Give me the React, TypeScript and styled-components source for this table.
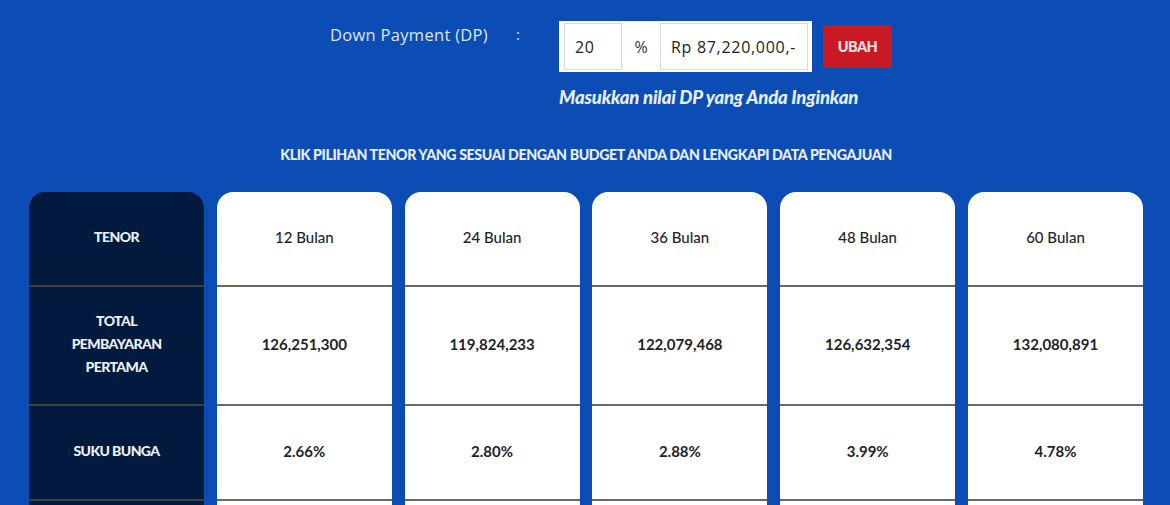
import React from "react";
import styled, { createGlobalStyle } from "styled-components";

const Global = createGlobalStyle`
  html, body { margin: 0; padding: 0; }
  body {
    background: #0b4db4;
    font-family: Lato, "Open Sans", sans-serif;
    width: 1170px;
    height: 505px;
    overflow: hidden;
  }
`;

const Page = styled.div`
  display: flex;
  flex-direction: column;
  padding-top: 21px;
`;

const FormRow = styled.div`
  display: flex;
  align-items: flex-start;
  padding-left: 330px;
`;

const Label = styled.div`
  font-family: "Open Sans", sans-serif;
  font-size: 16.5px;
  letter-spacing: 0.3px;
  color: #dce6f5;
  padding-top: 2px;
  width: 186px;
`;

const Colon = styled.div`
  font-family: "Open Sans", sans-serif;
  font-size: 15px;
  color: #dce6f5;
  padding-top: 3px;
  width: 43px;
`;

const FormBody = styled.div`
  display: flex;
  flex-direction: column;
  gap: 14px;
`;

const Controls = styled.div`
  display: flex;
  align-items: center;
  gap: 11px;
`;

const InputGroup = styled.div`
  display: flex;
  align-items: stretch;
  background: #ffffff;
  padding: 2px 4px 2px 5px;
  height: 47px;
`;

const Field = styled.div<{ $w: number }>`
  width: ${(p) => p.$w}px;
  box-sizing: border-box;
  border: 1px solid #d9d9d9;
  display: flex;
  align-items: center;
  padding-left: 10px;
  font-family: "Open Sans", sans-serif;
  font-size: 16px;
  letter-spacing: 0.7px;
  color: #222;
`;

const Unit = styled.div`
  width: 38px;
  display: flex;
  align-items: center;
  justify-content: center;
  font-family: "Open Sans", sans-serif;
  font-size: 16px;
  color: #333;
`;

const Button = styled.button`
  width: 69px;
  height: 43px;
  border: none;
  border-radius: 3px;
  background: #c81a22;
  color: #f3e3e5;
  font-family: Lato, sans-serif;
  font-weight: 900;
  font-size: 14.5px;
  letter-spacing: -0.5px;
  padding: 0;
`;

const Hint = styled.div`
  font-family: Lato, sans-serif;
  font-style: italic;
  font-weight: 900;
  font-size: 18.5px;
  color: #e6eef9;
  letter-spacing: -0.2px;
`;

const Heading = styled.div`
  margin-top: 38px;
  text-align: center;
  font-family: Lato, sans-serif;
  font-weight: 900;
  font-size: 14.2px;
  color: #e8eef8;
  letter-spacing: -0.4px;
  padding-left: 2px;
`;

const Grid = styled.div`
  margin-top: 29px;
  display: grid;
  grid-template-columns: repeat(6, 175px);
  column-gap: 12.8px;
  padding-left: 29px;
`;

const Column = styled.div<{ $dark?: boolean }>`
  display: flex;
  flex-direction: column;
  border-radius: 16px 16px 0 0;
  overflow: hidden;
  background: ${(p) => (p.$dark ? "#021a3d" : "#ffffff")};
`;

const Cell = styled.div<{ $dark?: boolean; $h: number; $strong?: boolean }>`
  height: ${(p) => p.$h}px;
  flex-shrink: 0;
  box-sizing: border-box;
  border-bottom: 2px solid ${(p) => (p.$dark ? "#3d423e" : "#6b6a5e")};
  display: flex;
  align-items: center;
  justify-content: center;
  text-align: center;
  padding: 0 10px 4px;
  font-family: Lato, sans-serif;
  font-size: ${(p) => (p.$dark ? "14px" : "15px")};
  font-weight: ${(p) => (p.$dark ? 900 : p.$strong ? 700 : 500)};
  letter-spacing: ${(p) => (p.$dark ? "-0.6px" : "0")};
  line-height: ${(p) => (p.$dark ? "23px" : "18px")};
  color: ${(p) => (p.$dark ? "#eef2f8" : "#1f2329")};
`;

const rowHeights = [95, 119, 95, 60];

const labels = ["TENOR", "TOTAL\nPEMBAYARAN\nPERTAMA", "SUKU BUNGA", ""];

const data = [
  { tenor: "12 Bulan", total: "126,251,300", rate: "2.66%" },
  { tenor: "24 Bulan", total: "119,824,233", rate: "2.80%" },
  { tenor: "36 Bulan", total: "122,079,468", rate: "2.88%" },
  { tenor: "48 Bulan", total: "126,632,354", rate: "3.99%" },
  { tenor: "60 Bulan", total: "132,080,891", rate: "4.78%" },
];

const Multi = styled.span`
  white-space: pre-line;
`;

export default function App() {
  return (
    <>
      <Global />
      <Page>
        <FormRow>
          <Label>Down Payment (DP)</Label>
          <Colon>:</Colon>
          <FormBody>
            <Controls>
              <InputGroup>
                <Field $w={58}>20</Field>
                <Unit>%</Unit>
                <Field $w={148}>Rp 87,220,000,-</Field>
              </InputGroup>
              <Button>UBAH</Button>
            </Controls>
            <Hint>Masukkan nilai DP yang Anda Inginkan</Hint>
          </FormBody>
        </FormRow>
        <Heading>KLIK PILIHAN TENOR YANG SESUAI DENGAN BUDGET ANDA DAN LENGKAPI DATA PENGAJUAN</Heading>
        <Grid>
          <Column $dark>
            {labels.map((l, i) => (
              <Cell key={i} $dark $h={rowHeights[i]}>
                <Multi>{l}</Multi>
              </Cell>
            ))}
          </Column>
          {data.map((d) => (
            <Column key={d.tenor}>
              <Cell $h={rowHeights[0]}>{d.tenor}</Cell>
              <Cell $h={rowHeights[1]} $strong>{d.total}</Cell>
              <Cell $h={rowHeights[2]} $strong>{d.rate}</Cell>
              <Cell $h={rowHeights[3]} />
            </Column>
          ))}
        </Grid>
      </Page>
    </>
  );
}
